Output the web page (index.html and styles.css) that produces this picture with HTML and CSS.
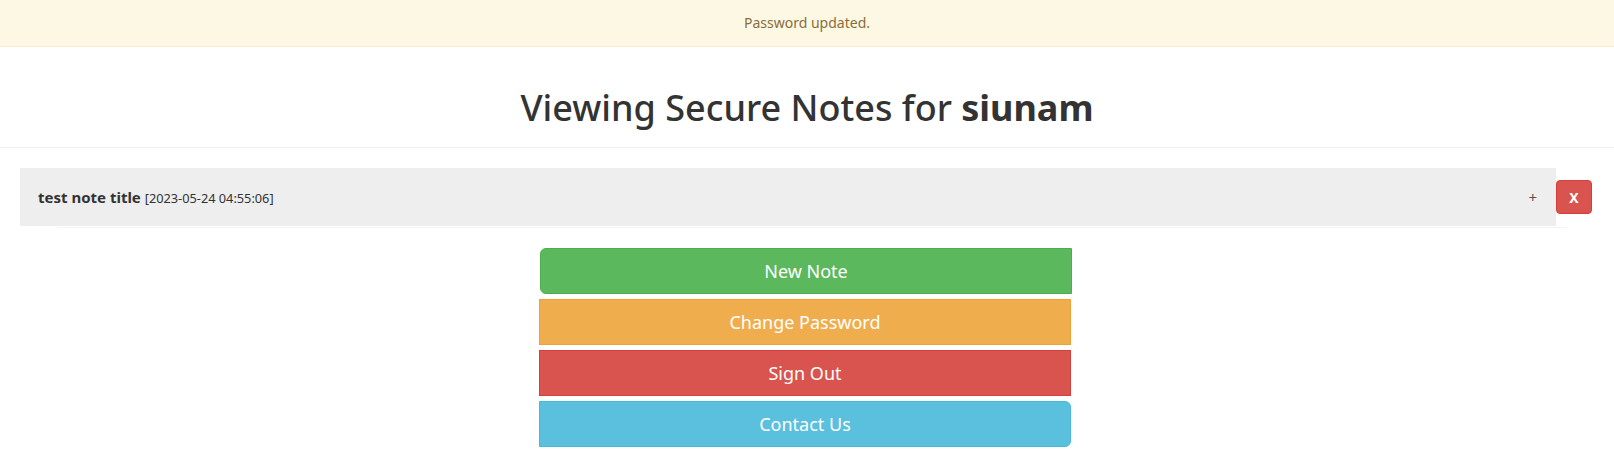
FILE: index.html
```html
<!DOCTYPE html>
<html>
<head>
<meta charset="utf-8">
<link rel="stylesheet" href="styles.css">
</head>
<body>
<div class="alert">Password updated.</div>
<h1 class="title">Viewing Secure Notes for <b>siunam</b></h1>
<hr class="rule">
<div class="notes">
  <div class="note-row">
    <div class="note-bar">
      <div class="note-head"><b>test note title</b> <small>[2023-05-24 04:55:06]</small></div>
      <span class="plus">+</span>
    </div>
    <button class="del">X</button>
  </div>
  <div class="note-shadow"></div>
</div>
<div class="actions">
  <button class="btn green">New Note</button>
  <button class="btn orange">Change Password</button>
  <button class="btn red">Sign Out</button>
  <button class="btn blue">Contact Us</button>
</div>
</body>
</html>
```
FILE: styles.css
```css
html, body {
  margin: 0;
  padding: 0;
  background: #fff;
  font-family: "Noto Sans", "Open Sans", sans-serif;
  color: #333;
  font-size: 14px;
  line-height: 20px;
}
.alert {
  background: #fcf8e3;
  border-bottom: 1px solid #faebcc;
  color: #8a6d3b;
  text-align: center;
  padding: 13px 15px 13px;
  font-size: 14px;
  line-height: 20px;
}
.title {
  margin: 41px 0 0;
  text-align: center;
  font-size: 36px;
  line-height: 40px;
  font-weight: 500;
  color: #333;
}
.title b { font-weight: 700; }
.rule {
  margin: 19px 0 0;
  border: 0;
  border-top: 1px solid #eee;
  height: 0;
}
.notes {
  padding: 20px 22px 0 20px;
}
.note-row {
  display: flex;
  align-items: center;
}
.note-bar {
  flex: 1;
  height: 58px;
  background: #eee;
  display: flex;
  align-items: center;
  justify-content: space-between;
  padding: 0 18px 0 18px;
  box-sizing: border-box;
  font-size: 15px;
}
.note-head b { font-weight: 700; color: #333; }
.note-head small { font-size: 85%; color: #333; }
.plus {
  color: #555;
  font-size: 15px;
  margin-right: 1px;
}
.del {
  width: 36px;
  height: 34px;
  background: #d9534f;
  border: 1px solid #d43f3a;
  border-radius: 4px;
  color: #fff;
  font-family: "Noto Sans", sans-serif;
  font-weight: 700;
  font-size: 14px;
  padding: 0;
}
.note-shadow {
  height: 1px;
  margin: 1px 25px 0 37px;
  background: #f4f4f4;
}
.actions {
  display: flex;
  flex-direction: column;
  align-items: center;
  gap: 5px;
  margin-top: 20px;
}
.btn {
  width: 532px;
  height: 46px;
  color: #fff;
  font-family: "Noto Sans", sans-serif;
  font-size: 18px;
  border: 1px solid;
  border-radius: 0;
  padding: 0;
  margin-left: -4px;
}
.green {
  background: #5cb85c;
  border-color: #4cae4c;
  border-radius: 6px 0 0 6px;
  margin-left: -2px;
}
.orange { background: #f0ad4e; border-color: #eea236; }
.red { background: #d9534f; border-color: #d43f3a; }
.blue {
  background: #5bc0de;
  border-color: #46b8da;
  border-radius: 0 6px 6px 0;
}
```
